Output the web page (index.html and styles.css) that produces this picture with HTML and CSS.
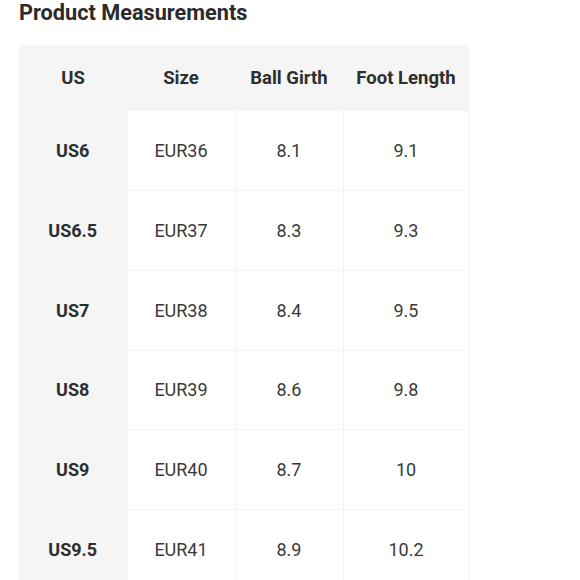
FILE: index.html
```html
<!DOCTYPE html>
<html>
<head>
<meta charset="utf-8">
<link rel="stylesheet" href="styles.css">
</head>
<body>
<h2 class="title">Product Measurements</h2>
<table class="sizes">
  <colgroup>
    <col class="c1"><col class="c2"><col class="c3"><col class="c4">
  </colgroup>
  <thead>
    <tr><th>US</th><th>Size</th><th>Ball Girth</th><th>Foot Length</th></tr>
  </thead>
  <tbody>
    <tr><th>US6</th><td>EUR36</td><td>8.1</td><td>9.1</td></tr>
    <tr><th>US6.5</th><td>EUR37</td><td>8.3</td><td>9.3</td></tr>
    <tr><th>US7</th><td>EUR38</td><td>8.4</td><td>9.5</td></tr>
    <tr><th>US8</th><td>EUR39</td><td>8.6</td><td>9.8</td></tr>
    <tr><th>US9</th><td>EUR40</td><td>8.7</td><td>10</td></tr>
    <tr><th>US9.5</th><td>EUR41</td><td>8.9</td><td>10.2</td></tr>
  </tbody>
</table>
</body>
</html>
```

FILE: styles.css
```css
html, body {
  margin: 0;
  padding: 0;
  background: #ffffff;
}
body {
  font-family: Roboto, "Liberation Sans", sans-serif;
  color: #333333;
  padding-left: 19px;
}
.title {
  margin: 0;
  font-size: 21.7px;
  line-height: 26px;
  font-weight: 700;
  color: #2b2b2b;
  padding-top: 0;
  height: 45px;
}
.sizes {
  border-collapse: collapse;
  table-layout: fixed;
  width: 450px;
  font-size: 18px;
}
.c1, .c2, .c3 { width: 108px; }
.c4 { width: 126px; }
.sizes thead th {
  background: #f5f5f5;
  height: 66px;
  font-weight: 700;
  font-size: 18.5px;
  color: #2e2e2e;
  text-align: center;
  padding: 0;
  border: 0;
}
.sizes tbody th {
  background: #f5f5f5;
  font-weight: 700;
  color: #2e2e2e;
  border: 0;
  padding: 0;
}
.sizes tbody tr {
  height: 79.7px;
}
.sizes tbody td {
  text-align: center;
  padding: 0;
  color: #3a3a3a;
  border: 1px solid #f3f3f3;
  border-top: 0;
}
.sizes tbody tr + tr td {
  border-top: 1px solid #f3f3f3;
}
```
